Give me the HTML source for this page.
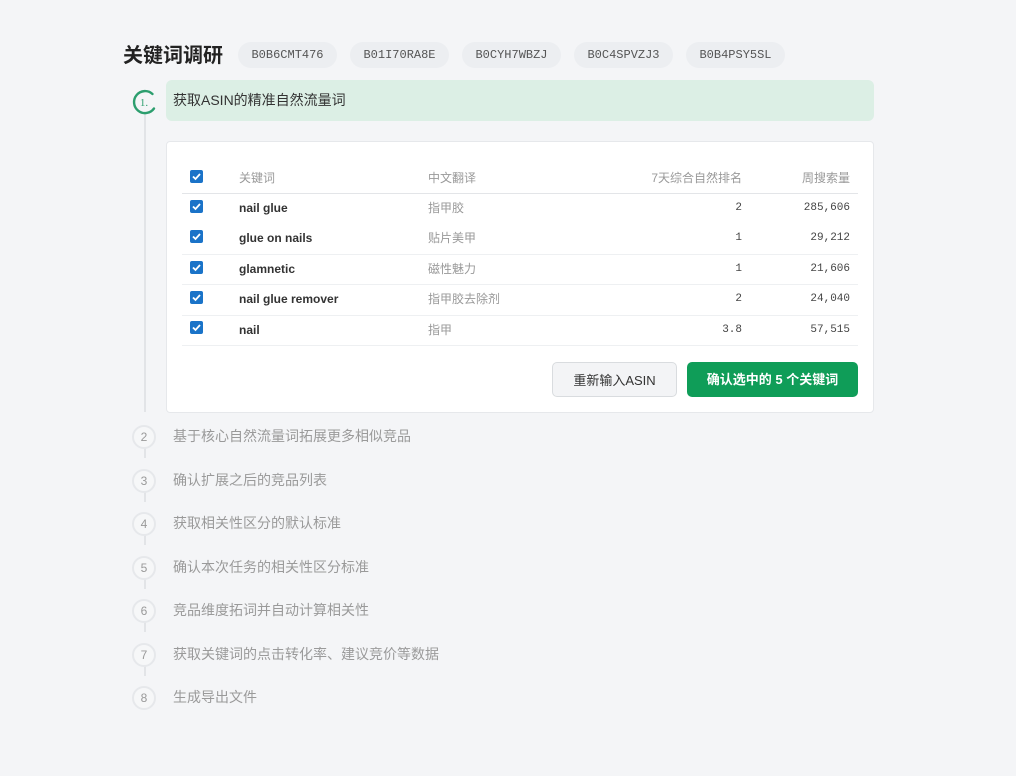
<!DOCTYPE html>
<html><head><meta charset="utf-8"><style>
*{box-sizing:border-box;margin:0;padding:0}
body{width:1016px;height:776px;background:#f4f5f7;font-family:"Liberation Sans","Noto Sans CJK SC",sans-serif;position:relative;overflow:hidden;color:#333}
.abs{position:absolute}
.title{left:123px;top:42px;font-size:20px;line-height:28px;font-weight:bold;color:#222}
.chip{top:42px;width:99px;height:26px;border-radius:13px;background:#eceef1;font-family:"Liberation Mono",monospace;font-size:12px;color:#555;text-align:center;line-height:26px}
.bar{left:166px;top:80px;width:708px;height:41px;background:#dcefe5;border-radius:6px;font-size:14px;line-height:41px;padding-left:7px;color:#333}
.card{left:166px;top:141px;width:708px;height:272px;background:#fff;border:1px solid #e6e8eb;border-radius:4px}
.vline{left:144px;width:2px;background:#e2e4e7}
.circ{left:132px;width:24px;height:24px;border-radius:50%;border:2px solid #e6e8eb;background:#f6f7f8;font-size:12px;color:#999;text-align:center;line-height:20px}
.st{left:173px;font-size:14px;line-height:20px;color:#9a9a9a}
.cb{left:190px;width:13px;height:13px;background:#1a73c8;border-radius:2px}
.cb svg{display:block}
.kw,.zh,.num,.hd{line-height:16px;height:16px}
.kw{left:239px;font-weight:bold;color:#333;font-size:12px}
.zh{left:428px;color:#999;font-size:12px}
.hd{font-size:12px;color:#999}
.num{font-family:"Liberation Mono",monospace;font-size:11px;color:#444;text-align:right}
.hr{left:182px;width:676px;height:1px;background:#eef0f2}
.btn{top:362px;height:35px;border-radius:5px;font-size:13px;text-align:center;line-height:35px}
</style></head><body>
<div class="abs title">关键词调研</div>
<div class="abs chip" style="left:238px">B0B6CMT476</div>
<div class="abs chip" style="left:350px">B01I70RA8E</div>
<div class="abs chip" style="left:462px">B0CYH7WBZJ</div>
<div class="abs chip" style="left:574px">B0C4SPVZJ3</div>
<div class="abs chip" style="left:686px">B0B4PSY5SL</div>

<div class="abs vline" style="top:114px;height:298px"></div>
<svg class="abs" style="left:130px;top:88px" width="28" height="28" viewBox="0 0 28 28"><path d="M22.5 6 A11 11 0 1 0 24 20.5" fill="none" stroke="#2c9e6e" stroke-width="2.4" stroke-linecap="round"/><text x="14" y="18" font-size="11" text-anchor="middle" fill="#2c9e6e" font-family="Liberation Serif">1.</text></svg>
<div class="abs bar">获取ASIN的精准自然流量词</div>

<div class="abs card"></div>
<div class="abs cb" style="top:170px"><svg width="13" height="13"><path d="M3 6.5l2.5 2.5 4.5-5" stroke="#fff" stroke-width="1.8" fill="none"/></svg></div>
<div class="abs hd" style="left:239px;top:170px">关键词</div>
<div class="abs hd" style="left:428px;top:170px">中文翻译</div>
<div class="abs hd" style="left:600px;width:142px;top:170px;text-align:right">7天综合自然排名</div>
<div class="abs hd" style="left:760px;width:90px;top:170px;text-align:right">周搜索量</div>
<div class="abs hr" style="top:193px;background:#e3e5e8"></div>

<div class="abs cb" style="top:200px"><svg width="13" height="13"><path d="M3 6.5l2.5 2.5 4.5-5" stroke="#fff" stroke-width="1.8" fill="none"/></svg></div>
<div class="abs kw" style="top:200px">nail glue</div><div class="abs zh" style="top:200px">指甲胶</div>
<div class="abs num" style="left:600px;width:142px;top:200px">2</div><div class="abs num" style="left:760px;width:90px;top:200px">285,606</div>

<div class="abs cb" style="top:230px"><svg width="13" height="13"><path d="M3 6.5l2.5 2.5 4.5-5" stroke="#fff" stroke-width="1.8" fill="none"/></svg></div>
<div class="abs kw" style="top:230px">glue on nails</div><div class="abs zh" style="top:230px">贴片美甲</div>
<div class="abs num" style="left:600px;width:142px;top:230px">1</div><div class="abs num" style="left:760px;width:90px;top:230px">29,212</div>
<div class="abs hr" style="top:254px"></div>

<div class="abs cb" style="top:261px"><svg width="13" height="13"><path d="M3 6.5l2.5 2.5 4.5-5" stroke="#fff" stroke-width="1.8" fill="none"/></svg></div>
<div class="abs kw" style="top:261px">glamnetic</div><div class="abs zh" style="top:261px">磁性魅力</div>
<div class="abs num" style="left:600px;width:142px;top:261px">1</div><div class="abs num" style="left:760px;width:90px;top:261px">21,606</div>
<div class="abs hr" style="top:284px"></div>

<div class="abs cb" style="top:291px"><svg width="13" height="13"><path d="M3 6.5l2.5 2.5 4.5-5" stroke="#fff" stroke-width="1.8" fill="none"/></svg></div>
<div class="abs kw" style="top:291px">nail glue remover</div><div class="abs zh" style="top:291px">指甲胶去除剂</div>
<div class="abs num" style="left:600px;width:142px;top:291px">2</div><div class="abs num" style="left:760px;width:90px;top:291px">24,040</div>
<div class="abs hr" style="top:315px"></div>

<div class="abs cb" style="top:321px"><svg width="13" height="13"><path d="M3 6.5l2.5 2.5 4.5-5" stroke="#fff" stroke-width="1.8" fill="none"/></svg></div>
<div class="abs kw" style="top:322px">nail</div><div class="abs zh" style="top:322px">指甲</div>
<div class="abs num" style="left:600px;width:142px;top:322px">3.8</div><div class="abs num" style="left:760px;width:90px;top:322px">57,515</div>
<div class="abs hr" style="top:345px"></div>

<div class="abs btn" style="left:552px;width:125px;background:#f3f4f6;border:1px solid #d9dcdf;color:#333">重新输入ASIN</div>
<div class="abs btn" style="left:687px;width:171px;background:#0f9d58;color:#fff;font-weight:bold">确认选中的 5 个关键词</div>

<div class="abs vline" style="top:448px;height:10px"></div>
<div class="abs vline" style="top:492px;height:10px"></div>
<div class="abs vline" style="top:535px;height:10px"></div>
<div class="abs vline" style="top:579px;height:10px"></div>
<div class="abs vline" style="top:622px;height:10px"></div>
<div class="abs vline" style="top:666px;height:10px"></div>

<div class="abs circ" style="top:425px">2</div><div class="abs st" style="top:426px">基于核心自然流量词拓展更多相似竞品</div>
<div class="abs circ" style="top:469px">3</div><div class="abs st" style="top:470px">确认扩展之后的竞品列表</div>
<div class="abs circ" style="top:512px">4</div><div class="abs st" style="top:513px">获取相关性区分的默认标准</div>
<div class="abs circ" style="top:556px">5</div><div class="abs st" style="top:557px">确认本次任务的相关性区分标准</div>
<div class="abs circ" style="top:599px">6</div><div class="abs st" style="top:600px">竞品维度拓词并自动计算相关性</div>
<div class="abs circ" style="top:643px">7</div><div class="abs st" style="top:644px">获取关键词的点击转化率、建议竞价等数据</div>
<div class="abs circ" style="top:686px">8</div><div class="abs st" style="top:687px">生成导出文件</div>
</body></html>
